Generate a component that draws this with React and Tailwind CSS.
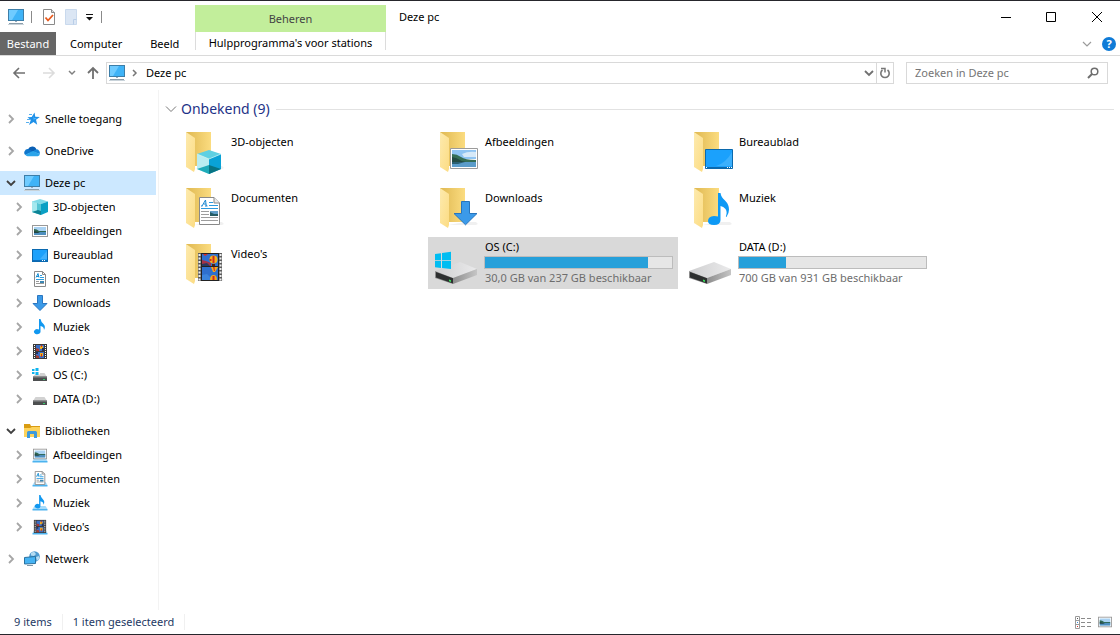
import { useState } from "react";

function PcIcon({ className = "h-4 w-4" }) {
  return (
    <svg viewBox="0 0 16 16" className={className} aria-hidden="true">
      <rect x="0.5" y="0.5" width="15" height="11" fill="#3fb3f7" stroke="#3d7ea8" />
      <path d="M1 1h9L4 11H1z" fill="#6fcbff" />
      <path d="M7 12h2v1H7z" fill="#9ab" />
      <path d="M1 14h14v1H1z" fill="#8b9daa" />
      <path d="M0 15h16v1H0z" fill="#c9d3da" />
    </svg>
  );
}

function StarIcon() {
  return (
    <svg viewBox="0 0 16 16" className="h-4 w-4" aria-hidden="true">
      <path d="M10.500 1.500l.8 4.200 4.500 .3-3.800 2.700 1.200 5-3.700-2.700-4.500 3 1.800-5L3.500 6.200l4.200-.3z" fill="#1e90e8" />
      <path d="M9.500 4.500l.5 2.500 3 .2-3.500 1.600z" fill="#53b7ff" />
      <path d="M5 3.500h3M3 8.500h3M2 11.500h3" stroke="#57b0ee" />
    </svg>
  );
}

function CloudIcon() {
  return (
    <svg viewBox="0 0 16 16" className="h-4 w-4" aria-hidden="true">
      <path d="M4 6.200A4.600 4.600 0 0 1 12.500 6.500L8 10 1 8.500z" fill="#0a5fb4" />
      <path d="M3.800 6A3.600 3.600 0 0 0 1.200 12L9 8.500z" fill="#0f76cc" />
      <path d="M12 6.400A3.400 3.400 0 0 1 15.600 11L8.500 8.500z" fill="#1686d9" />
      <path d="M1.200 11.800L9 8l6.800 3a2.300 2.300 0 0 1-2 2.200H3.600a3.400 3.400 0 0 1-2.400-1.400z" fill="#2aa4ea" />
    </svg>
  );
}

function CubeIcon() {
  return (
    <svg viewBox="0 0 16 16" className="h-4 w-4" aria-hidden="true">
      <path d="M0 2.500L8 0l8 2.500L9 5z" fill="#7fdbe8" />
      <path d="M0 2.500L9 5v11L0 13z" fill="#54c5d4" />
      <path d="M0 2.500L5 4v8l-5 1z" fill="#a5e8ee" />
      <path d="M9 5l7-2.500V13l-7 3z" fill="#0aa0c4" />
      <path d="M0 13l6-2 3 1v4z" fill="#0d8496" />
    </svg>
  );
}

function PictureIcon() {
  return (
    <svg viewBox="0 0 16 16" className="h-4 w-4" aria-hidden="true">
      <rect x="0.500" y="2.500" width="15" height="11" fill="#fff" stroke="#999" />
      <path d="M2 4h12v8H2z" fill="#a9d2f3" />
      <path d="M2 6q3 0 5 2h7v1.500H2z" fill="#2e6750" />
      <path d="M2 9h12v3H2z" fill="#4e8fbf" />
      <path d="M2 8l4 1 2 1H2z" fill="#23433f" />
    </svg>
  );
}

function DesktopIcon() {
  return (
    <svg viewBox="0 0 16 16" className="h-4 w-4" aria-hidden="true">
      <rect x="0.500" y="2.500" width="15" height="12" fill="#1da1fb" stroke="#0b69b0" />
      <path d="M1 13h14v1H1z" fill="#0c6dba" />
      <path d="M10 13.500h4" stroke="#fff" strokeDasharray="1 1" />
      <path d="M15 4v8H8z" fill="#41b1fd" />
    </svg>
  );
}

function DocumentIcon() {
  return (
    <svg viewBox="0 0 16 16" className="h-4 w-4" aria-hidden="true">
      <path d="M2.500.500h8l3 3v12h-11z" fill="#fff" stroke="#8a8a8a" />
      <path d="M10.500.500v3h3" fill="none" stroke="#8a8a8a" />
      <path d="M4 6.500L6 2.500l1 4M5 5.500h2" fill="none" stroke="#168fd6" />
      <path d="M8 4.500h2M8 6.500h4M4 8.500h8" stroke="#2b9de0" />
      <path d="M4 10.500h3M4 12.500h8" stroke="#9a9a9a" />
      <path d="M8 10h4v2H8z" fill="#3a86b3" />
    </svg>
  );
}

function DownloadIcon() {
  return (
    <svg viewBox="0 0 16 16" className="h-4 w-4" aria-hidden="true">
      <path d="M5.500.500h5v8h4.500L8 15.500 1 8.500h4.500z" fill="#3b9ae8" stroke="#2b76c0" />
    </svg>
  );
}

function MusicIcon() {
  return (
    <svg viewBox="0 0 16 16" className="h-4 w-4" aria-hidden="true">
      <path d="M7 0h1.500q.5 3 3 5 2.500 2.500.5 6 0-3.500-3.500-4v6a3.300 2.600 0 1 1-1.500-2.500z" fill="#1198f0" />
    </svg>
  );
}

function VideoIcon() {
  return (
    <svg viewBox="0 0 16 16" className="h-4 w-4" aria-hidden="true">
      <path d="M1 1h14v15H1z" fill="#3b3b3b" />
      <path d="M2.500 2v13M13.500 2v13" stroke="#fff" strokeDasharray="1 1" />
      <path d="M4 2h8v6H4zM4 9h8v6H4z" fill="#3c6fc4" />
      <path d="M4 5l3 1v2H4zM4 12l3 1v2H4z" fill="#a33b31" />
      <path d="M8 3h3v3H8zM8 10h3v3H8z" fill="#f0b01e" />
      <path d="M9 2h1v2H9zM9 11h1v3H9zM6 6h1v2H6z" fill="#c63122" />
      <path d="M10 5h2v3h-2zM4 9h2v2H4z" fill="#22335e" />
    </svg>
  );
}

function DriveIcon({ windows }) {
  return (
    <svg viewBox="0 0 16 16" className="h-4 w-4" aria-hidden="true">
      <path d="M3.500 6h9L15 10H1z" fill="#d2d2d2" />
      <path d="M1 9.500h14V14H1z" fill="#4d4f50" />
      <path d="M1 9.500h14v1H1z" fill="#8d8f90" />
      <path d="M11 12h2v1h-2z" fill="#35d06a" />
      {windows && (
        <>
          <path d="M0 0h8v7.500H0z" fill="#fff" />
          <path d="M0 2h2.500v2H0zM3.500 1h3v3h-3zM0 5h2.500v2H0zM3.500 5h3v3h-3z" fill="#10b4ee" />
        </>
      )}
    </svg>
  );
}

function LibraryFolderIcon() {
  return (
    <svg viewBox="0 0 16 16" className="h-4 w-4" aria-hidden="true">
      <path d="M0 1h6l1 2h9v11H0z" fill="#d99c12" />
      <path d="M0 5h6l2-1h8v10H0z" fill="#fdd35c" />
      <path d="M3 15V9.500Q3 8 4.500 8h7Q13 8 13 9.500V15h-3v-4H6v4z" fill="#3e9adb" />
    </svg>
  );
}

// library entries are the plain icon standing on a light blue shelf
function OnShelf({ children }) {
  return (
    <span className="relative block h-4 w-4">
      <svg viewBox="0 0 16 16" className="absolute inset-0 h-4 w-4" aria-hidden="true">
        <path d="M2.500 11h11l2 3H.500z" fill="#a5dbfb" />
        <path d="M.500 14h15v1.500H.500z" fill="#4cb3ef" />
      </svg>
      <span className="absolute left-px top-0 [&_svg]:h-3.5 [&_svg]:w-3.5">{children}</span>
    </span>
  );
}

function NetworkIcon() {
  return (
    <svg viewBox="0 0 16 16" className="h-4 w-4" aria-hidden="true">
      <circle cx="10.500" cy="5.500" r="5.300" fill="#4f9bcf" />
      <path d="M7 2l3-1.500L12 3l-2 2-3-.5zM12 6l3-1v3l-2 2z" fill="#b5dcf2" />
      <path d="M.500 6.500l11-1v7l-11 .5z" fill="#46b3f3" stroke="#2a719f" />
      <path d="M3 14.500h6" stroke="#7e97a8" />
    </svg>
  );
}

function FolderBack() {
  return (
    <>
      <path d="M8 5h25v34H15z" fill="url(#folderBack)" />
      <path d="M33 39h11l2 2-2 1H16z" fill="#000" opacity=".06" />
      <path d="M8 5l9 6v31l-1 3-8-5z" fill="url(#folderFlap)" />
    </>
  );
}

const overlays = {
  cube: (
    <>
      <path d="M19 27l12-4 12 4-12 5z" fill="#5fd0e2" />
      <path d="M19 27l12 5v15l-12-5z" fill="#b9edf1" />
      <path d="M31 32l12-5v15l-12 5z" fill="#0aa2d6" />
      <path d="M19 42l12-4v9z" fill="#1fabb9" />
      <path d="M31 38l12 4-12 5z" fill="#087483" />
      <path d="M19 27l12 5 12-5" fill="none" stroke="#c9f5f8" strokeWidth=".7" />
    </>
  ),
  picture: (
    <>
      <path d="M18.500 21.500h27v20h-27z" fill="#fff" stroke="#9b9b9b" />
      <path d="M20 23h24v9H20z" fill="#8fc4f2" />
      <path d="M30 27q6-3 14-2v5H32z" fill="#d6e9f8" />
      <path d="M20 27q5 0 9 3t15 3v2H20z" fill="#356e55" />
      <path d="M20 30q5 1 8 3t9 2H20z" fill="#224b43" />
      <path d="M20 35h24v5H20z" fill="#5b9cca" />
      <path d="M20 35h13l-7 2h-6z" fill="#2a6073" />
    </>
  ),
  desktop: (
    <>
      <path d="M19.500 22.500h27v19h-27z" fill="#1ba1fc" stroke="#0b69ad" />
      <path d="M46 25v14H30q10-3 16-14z" fill="#3cb0fd" />
      <path d="M20 40h26v1H20z" fill="#0b68ad" />
      <path d="M20 40.500h1M41 40.500h5" stroke="#fff" strokeDasharray="1 1" />
    </>
  ),
  document: (
    <>
      <path d="M21.500 14.500H36l5.500 5.500v21.500h-20z" fill="#fff" stroke="#898989" />
      <path d="M36 14.500V20h5.500" fill="#e9e9e9" stroke="#898989" />
      <path d="M23 23h1.500M27 23h2.500M24 23l3.500-6 .8 6M25.500 21h2.500" fill="none" stroke="#1787d2" />
      <path d="M31 19.500h4M31 22.500h9M23 25.500h17" stroke="#2c99dd" />
      <path d="M23 28.500h8M23 31.500h8M23 34.500h17M23 37.500h17" stroke="#9d9d9d" />
      <path d="M32 28h8v5h-8z" fill="#629fc9" />
      <path d="M32 29l4 2h4v2h-8z" fill="#255c64" />
    </>
  ),
  download: (
    <path d="M29.500 18.500h8v12h7.500L33.500 41.800 22 30.500h7.500z" fill="#3b9ae9" stroke="#2775bd" />
  ),
  music: (
    <path
      d="M32 10h2.500q.5 4 4.500 7.500 4 4 4 9 0 4-2.500 7.500-1 0-.5-1 1.500-4-.5-7-2-2.500-5-3v14q0 5-6.500 5-6 0-6-4 0-4.500 6-5 2.500 0 4 .5z"
      fill="#0d99f5"
    />
  ),
  video: (
    <>
      <path d="M20 14h24v28H20z" fill="#5c5c5c" />
      <path d="M21.500 15v27M42.500 15v27" stroke="#eee" strokeWidth="2" strokeDasharray="2 1.500" />
      <path d="M23 14h18v28H23z" fill="#222" />
      <path d="M24 15h16v12H24zM24 28h16v13H24z" fill="#2e6fcd" />
      <path d="M24 21l4 1 5 2v3h-9z" fill="#a33348" />
      <path d="M24 25l5-1 3 3h-8z" fill="#27385f" />
      <path d="M24 36l5-1 4 4v2h-9z" fill="#3b84dc" />
      <circle cx="35.500" cy="20.500" r="4" fill="#f3b31c" />
      <path d="M34.500 17h2v7h-2zM31.500 20h2v2h-2z" fill="#cf2a20" />
      <path d="M34 25h3v2h-3z" fill="#4b2215" />
      <path d="M33 28h7l-3 5h-2z" fill="#f0a91d" />
      <path d="M35 28h1.500l.5 4h-1zM25 15h5l-3 2z" fill="#d42c20" />
      <path d="M32 41q0-5 3.500-5t3.500 5z" fill="#f0a91d" />
      <path d="M34.500 37h2v4h-2z" fill="#cf2a20" />
    </>
  ),
};

function LargeFolder({ overlay }) {
  return (
    <svg viewBox="0 0 48 48" className="h-12 w-12 shrink-0" aria-hidden="true">
      <defs>
        <linearGradient id="folderBack" x1="0" x2="1">
          <stop offset="0" stopColor="#dfb851" />
          <stop offset="1" stopColor="#fbdc80" />
        </linearGradient>
        <linearGradient id="folderFlap" x1="0" x2="1" y1="0" y2="1">
          <stop offset="0" stopColor="#fdeaae" />
          <stop offset="1" stopColor="#fcdc83" />
        </linearGradient>
      </defs>
      <FolderBack />
      {overlays[overlay]}
    </svg>
  );
}

function LargeDrive({ windows }) {
  return (
    <svg viewBox="0 0 48 48" className="h-12 w-12 shrink-0" aria-hidden="true">
      <defs>
        <linearGradient id="driveTop" x1="0" x2="1">
          <stop offset="0" stopColor="#cfcfd0" />
          <stop offset="1" stopColor="#eaeaeb" />
        </linearGradient>
        <linearGradient id="driveSide" x1="0" x2="1">
          <stop offset="0" stopColor="#8d8d8d" />
          <stop offset="1" stopColor="#c5c5c5" />
        </linearGradient>
      </defs>
      <path d="M3 32l25-9 17 7-24 9z" fill="url(#driveTop)" />
      <path d="M21 39l24-9v6l-24 9z" fill="url(#driveSide)" />
      <path d="M3 32l18 7v6L3 39z" fill="#8c8c8c" />
      <path d="M4 33l17 6.300v5.200L4 38.500z" fill="#2d2f2f" />
      <path d="M17 40.500l2 .8v1.700l-2-.8z" fill="#39e35c" />
      {windows && (
        <path d="M3 15l6-.8v7H3zM10 14l9-1.200v8.400h-9zM3 22h6v7l-6-.8zM10 22h9v8l-9-1z" fill="#00bdf2" />
      )}
    </svg>
  );
}

function Chevron({ open }) {
  return open ? (
    <svg viewBox="0 0 10 10" className="h-2.5 w-2.5" aria-hidden="true">
      <path d="M1 3l4 4 4-4" fill="none" stroke="#404040" strokeWidth="1.800" />
    </svg>
  ) : (
    <svg viewBox="0 0 10 10" className="h-2.5 w-2.5" aria-hidden="true">
      <path d="M3 1l4 4-4 4" fill="none" stroke="#a6a6a6" strokeWidth="1.800" />
    </svg>
  );
}

const tree = [
  { label: "Snelle toegang", icon: <StarIcon /> },
  { label: "OneDrive", icon: <CloudIcon /> },
  {
    label: "Deze pc",
    icon: <PcIcon />,
    children: [
      { label: "3D-objecten", icon: <CubeIcon /> },
      { label: "Afbeeldingen", icon: <PictureIcon /> },
      { label: "Bureaublad", icon: <DesktopIcon /> },
      { label: "Documenten", icon: <DocumentIcon /> },
      { label: "Downloads", icon: <DownloadIcon /> },
      { label: "Muziek", icon: <MusicIcon /> },
      { label: "Video's", icon: <VideoIcon /> },
      { label: "OS (C:)", icon: <DriveIcon windows /> },
      { label: "DATA (D:)", icon: <DriveIcon /> },
    ],
  },
  {
    label: "Bibliotheken",
    icon: <LibraryFolderIcon />,
    children: [
      { label: "Afbeeldingen", icon: <OnShelf><PictureIcon /></OnShelf> },
      { label: "Documenten", icon: <OnShelf><DocumentIcon /></OnShelf> },
      { label: "Muziek", icon: <OnShelf><MusicIcon /></OnShelf> },
      { label: "Video's", icon: <OnShelf><VideoIcon /></OnShelf> },
    ],
  },
  { label: "Netwerk", icon: <NetworkIcon /> },
];

const items = [
  { name: "3D-objecten", overlay: "cube" },
  { name: "Afbeeldingen", overlay: "picture" },
  { name: "Bureaublad", overlay: "desktop" },
  { name: "Documenten", overlay: "document" },
  { name: "Downloads", overlay: "download" },
  { name: "Muziek", overlay: "music" },
  { name: "Video's", overlay: "video" },
  { name: "OS (C:)", drive: true, windows: true, used: 87, info: "30,0 GB van 237 GB beschikbaar" },
  { name: "DATA (D:)", drive: true, used: 25, info: "700 GB van 931 GB beschikbaar" },
];

function TitleBar() {
  return (
    <header className="flex h-[55px] border-b border-[#dadada]">
      <div className="flex w-[195px] shrink-0 flex-col">
        <div className="flex h-[31px] items-center pl-2">
          <PcIcon />
          <span className="ml-[7px] h-3 w-px bg-[#8a8a8a]" />
          <button type="button" aria-label="Eigenschappen" className="ml-2.5">
            <svg viewBox="0 0 14 16" className="h-4 w-3.5" aria-hidden="true">
              <path d="M1.500.500h8l3 3v12h-11z" fill="#fff" stroke="#8a8a8a" />
              <path d="M9.500.500v3h3" fill="#ddd" stroke="#8a8a8a" />
              <path d="M3.500 8.500l2.500 3L11 6" fill="none" stroke="#e8591c" strokeWidth="1.800" />
            </svg>
          </button>
          <button type="button" aria-label="Nieuwe map" className="ml-2">
            <svg viewBox="0 0 14 16" className="h-4 w-3.5" aria-hidden="true">
              <path d="M1.500.500h11v15h-11z" fill="#dbe6f4" stroke="#c9d9ed" />
              <path d="M9.500 15.500v-5h3" fill="none" stroke="#b9cee8" />
            </svg>
          </button>
          <button type="button" aria-label="Werkbalk Snelle toegang aanpassen" className="ml-2 pt-0.5">
            <svg viewBox="0 0 7 7" className="h-[7px] w-[7px]" aria-hidden="true">
              <path d="M0 0h7v1H0zM0 3h7L3.500 6.500z" fill="#111" />
            </svg>
          </button>
          <span className="ml-2 h-3 w-px bg-[#8a8a8a]" />
        </div>
        <nav className="flex h-[23px]">
          <button type="button" className="w-14 shrink-0 bg-[#666] text-white">Bestand</button>
          <button type="button" className="shrink-0 px-3.5">Computer</button>
          <button type="button" className="shrink-0 px-3.5">Beeld</button>
        </nav>
      </div>
      <div className="flex w-[191px] shrink-0 flex-col pt-1">
        <div className="flex h-[27px] items-center justify-center bg-[#c2ee9b] text-[#444]">Beheren</div>
        <button type="button" className="flex h-[18px] items-end justify-center whitespace-nowrap border-x border-[#dcdcdc] leading-[14px]">
          Hulpprogramma's voor stations
        </button>
      </div>
      <div className="flex min-w-0 flex-1 flex-col">
        <div className="flex h-[31px] items-center pl-[13px]">
          <h1 className="flex-1">Deze pc</h1>
          <button type="button" aria-label="Minimaliseren" className="flex h-full w-[45px] items-center justify-center">
            <svg viewBox="0 0 12 12" className="h-3 w-3" aria-hidden="true">
              <path d="M1 6.500h10" stroke="#000" />
            </svg>
          </button>
          <button type="button" aria-label="Maximaliseren" className="flex h-full w-[45px] items-center justify-center">
            <svg viewBox="0 0 12 12" className="h-3 w-3" aria-hidden="true">
              <path d="M1.500 1.500h9v9h-9z" fill="none" stroke="#000" />
            </svg>
          </button>
          <button type="button" aria-label="Sluiten" className="flex h-full w-[47px] items-center justify-center">
            <svg viewBox="0 0 12 12" className="h-3 w-3" aria-hidden="true">
              <path d="M1 1l10 10M11 1L1 11" stroke="#000" />
            </svg>
          </button>
        </div>
        <div className="flex h-[23px] items-center justify-end gap-2.5 pr-1">
          <button type="button" aria-label="Lint uitvouwen">
            <svg viewBox="0 0 10 10" className="h-2.5 w-2.5" aria-hidden="true">
              <path d="M1 3l4 4 4-4" fill="none" stroke="#9b9b9b" strokeWidth="1.200" />
            </svg>
          </button>
          <button
            type="button"
            aria-label="Help"
            className="flex h-3.5 w-3.5 items-center justify-center rounded-full bg-[#0f7bd7] text-[11px] font-bold text-white"
          >
            ?
          </button>
        </div>
      </div>
    </header>
  );
}

function AddressBar() {
  return (
    <div className="flex h-[34px] items-center pr-3">
      <div className="flex w-[106px] shrink-0 items-center pl-3">
        <button type="button" aria-label="Vorige">
          <svg viewBox="0 0 14 12" className="h-3 w-3.5" aria-hidden="true">
            <path d="M13 6H2M7 1L2 6l5 5" fill="none" stroke="#707070" strokeWidth="1.600" />
          </svg>
        </button>
        <button type="button" aria-label="Volgende" className="ml-4">
          <svg viewBox="0 0 14 12" className="h-3 w-3.5" aria-hidden="true">
            <path d="M1 6h11M7 1l5 5-5 5" fill="none" stroke="#dcdcdc" strokeWidth="1.600" />
          </svg>
        </button>
        <button type="button" aria-label="Recente locaties" className="ml-3">
          <svg viewBox="0 0 8 8" className="h-2 w-2" aria-hidden="true">
            <path d="M1 2l3 3 3-3" fill="none" stroke="#808080" strokeWidth="1.500" />
          </svg>
        </button>
        <button type="button" aria-label="Omhoog" className="ml-2.5">
          <svg viewBox="0 0 14 14" className="h-3.5 w-3.5" aria-hidden="true">
            <path d="M7 13V2M2 7l5-5 5 5" fill="none" stroke="#707070" strokeWidth="1.800" />
          </svg>
        </button>
      </div>
      <div className="flex h-[22px] min-w-0 flex-1 items-center border border-[#d9d9d9] pl-0.5">
        <PcIcon />
        <svg viewBox="0 0 8 8" className="ml-1.5 h-2 w-2" aria-hidden="true">
          <path d="M2 1l3 3-3 3" fill="none" stroke="#777" strokeWidth="1.500" />
        </svg>
        <button type="button" className="ml-[7px]">Deze pc</button>
        <button type="button" aria-label="Vorige locaties" className="ml-auto mr-0.5">
          <svg viewBox="0 0 10 10" className="h-2.5 w-2.5" aria-hidden="true">
            <path d="M1 3l4 4 4-4" fill="none" stroke="#707070" strokeWidth="1.800" />
          </svg>
        </button>
        <button
          type="button"
          aria-label="Vernieuwen"
          className="flex h-full w-[17px] items-center justify-center border-l border-[#d9d9d9]"
        >
          <svg viewBox="0 0 12 12" className="h-3 w-3" aria-hidden="true">
            <path d="M3.500 3A4.200 4.200 0 1 0 8.500 3" fill="none" stroke="#777" strokeWidth="1.600" />
            <path d="M2 1.500h4v4" fill="none" stroke="#777" strokeWidth="1.500" />
          </svg>
        </button>
      </div>
      <label className="ml-3 flex h-[22px] w-[202px] items-center border border-[#d9d9d9] pl-2 pr-2">
        <input
          type="search"
          aria-label="Zoeken in Deze pc"
          placeholder="Zoeken in Deze pc"
          className="min-w-0 flex-1 bg-transparent outline-none placeholder:text-[#757575]"
        />
        <svg viewBox="0 0 12 12" className="h-3 w-3" aria-hidden="true">
          <circle cx="7.500" cy="4.500" r="3.300" fill="none" stroke="#6e6e6e" strokeWidth="1.500" />
          <path d="M5 7L1 11" stroke="#6e6e6e" strokeWidth="2" />
        </svg>
      </label>
    </div>
  );
}

function TreeRow({ node, child, selected, open, onToggle }) {
  return (
    <div
      className={`flex h-6 items-center ${child ? "pl-3.5" : "pl-1.5"} ${selected ? "bg-[#cce8ff]" : ""}`}
    >
      <button type="button" aria-label={`${node.label} uitvouwen`} onClick={onToggle}>
        <Chevron open={open} />
      </button>
      <a href="#" className="ml-2 flex items-center gap-[5px] whitespace-nowrap">
        {node.icon}
        {node.label}
      </a>
    </div>
  );
}

function Sidebar() {
  const [closed, setClosed] = useState({});

  return (
    <nav className="flex w-[159px] shrink-0 flex-col gap-2 border-r border-[#f3f3f3] pr-0.5 pt-[17px]">
      {tree.map((node) => {
        const open = Boolean(node.children) && !closed[node.label];
        return (
          <div key={node.label}>
            <TreeRow
              node={node}
              open={open}
              selected={node.label === "Deze pc"}
              onToggle={() => setClosed((prev) => ({ ...prev, [node.label]: !prev[node.label] }))}
            />
            {open && node.children.map((c) => <TreeRow key={c.label} node={c} child />)}
          </div>
        );
      })}
    </nav>
  );
}

function Item({ item, selected, onSelect }) {
  return (
    <button
      type="button"
      onClick={onSelect}
      className={`flex h-[52px] gap-1 py-0.5 pl-1 pr-[5px] text-left ${selected ? "bg-[#d9d9d9]" : ""}`}
    >
      {item.drive ? <LargeDrive windows={item.windows} /> : <LargeFolder overlay={item.overlay} />}
      {item.drive ? (
        <span className="min-w-0 flex-1">
          <span className="block pl-px leading-4">{item.name}</span>
          <span className="mt-px block h-[13px] border border-[#bcbcbc] bg-[#e6e6e6]">
            <span className="block h-full bg-[#26a0da]" style={{ width: `${item.used}%` }} />
          </span>
          <span className="mt-px block whitespace-nowrap pl-px text-[#6d6d6d]">{item.info}</span>
        </span>
      ) : (
        <span className="pl-px pt-[7px] leading-4">{item.name}</span>
      )}
    </button>
  );
}

export default function App() {
  const [selected, setSelected] = useState("OS (C:)");

  return (
    <div className="flex min-h-screen flex-col border-y border-[#26262c] bg-white font-['Noto_Sans','Open_Sans',sans-serif] text-[11px] leading-4 text-black">
      <TitleBar />
      <AddressBar />
      <div className="flex flex-1">
        <Sidebar />
        <main className="min-w-0 flex-1 px-1.5 pt-2">
          <h2 className="flex h-[22px] items-center text-[14px] text-[#1e3287]">
            <button type="button" className="flex items-center gap-1">
              <svg viewBox="0 0 12 12" className="h-3 w-3" aria-hidden="true">
                <path d="M1 3.500l5 5 5-5" fill="none" stroke="#777" />
              </svg>
              Onbekend (9)
            </button>
            <span className="ml-1.5 h-px flex-1 bg-[#e2e2e2]" />
          </h2>
          <div className="ml-[9px] mt-[5px] grid grid-cols-[repeat(auto-fill,250px)] gap-1 max-xl:pr-[120px]">
            {items.map((item) => (
              <Item
                key={item.name}
                item={item}
                selected={item.name === selected}
                onSelect={() => setSelected(item.name)}
              />
            ))}
          </div>
        </main>
      </div>
      <footer className="flex h-6 items-center pl-3.5 pr-2 text-[#1e3964]">
        <span>9 items</span>
        <span className="ml-2.5 h-4 w-px bg-[#f0f0f0]" />
        <span className="ml-2.5">1 item geselecteerd</span>
        <span className="ml-2.5 h-4 w-px bg-[#f0f0f0]" />
        <div className="ml-auto flex items-center gap-1.5">
          <button type="button" aria-label="Details">
            <svg viewBox="0 0 17 13" className="h-[13px] w-[17px]" aria-hidden="true">
              <path d="M.500.500h4v12h-4zM.500 4.500h4M.500 8.500h4" fill="none" stroke="#9a9a9a" />
              <path d="M2 2h1v1H2z" fill="#555" />
              <path d="M2 6h1v1H2z" fill="#3a8fe0" />
              <path d="M2 10h1v1H2z" fill="#d33" />
              <path d="M6 2.500h4M12 2.500h4M6 6.500h4M12 6.500h4M6 10.500h4M12 10.500h4" stroke="#8a8a8a" />
            </svg>
          </button>
          <button type="button" aria-label="Grote pictogrammen" className="[&>svg]:h-3.5 [&>svg]:w-3.5">
            <PictureIcon />
          </button>
        </div>
      </footer>
    </div>
  );
}
